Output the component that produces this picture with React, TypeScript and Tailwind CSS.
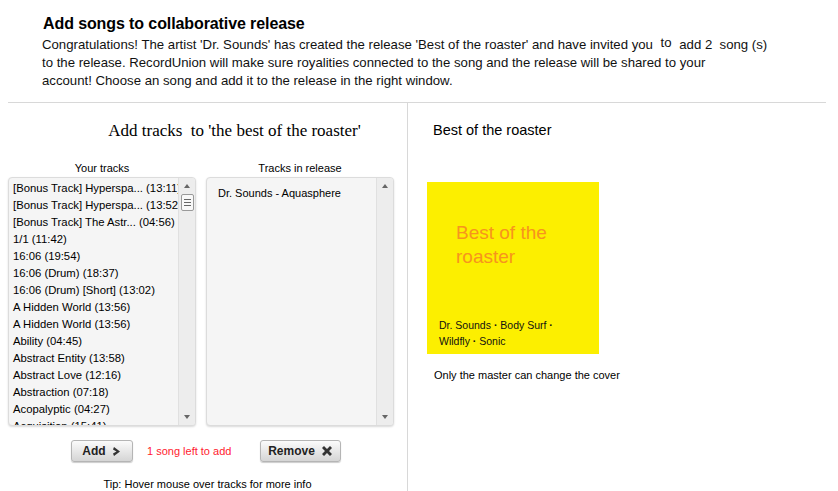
import React from "react";

const tracks = [
  "[Bonus Track] Hyperspa... (13:11)",
  "[Bonus Track] Hyperspa... (13:52)",
  "[Bonus Track] The Astr... (04:56)",
  "1/1 (11:42)",
  "16:06 (19:54)",
  "16:06 (Drum) (18:37)",
  "16:06 (Drum) [Short] (13:02)",
  "A Hidden World (13:56)",
  "A Hidden World (13:56)",
  "Ability (04:45)",
  "Abstract Entity (13:58)",
  "Abstract Love (12:16)",
  "Abstraction (07:18)",
  "Acopalyptic (04:27)",
  "Acquisition (15:41)",
];

function ScrollBar({ thumb }: { thumb?: boolean }) {
  return (
    <div className="absolute right-0 top-0 bottom-0 w-[17px] bg-[#ededed] border-l border-[#e0e0e0] flex flex-col items-center">
      <div className="h-[16px] w-full flex items-center justify-center">
        <div className="w-0 h-0 border-l-[3px] border-r-[3px] border-b-[4px] border-l-transparent border-r-transparent border-b-[#666]" />
      </div>
      {thumb && (
        <div className="w-[13px] h-[17px] bg-[#f8f8f8] border border-[#999] rounded-[2px] flex flex-col items-center justify-center gap-[2px]">
          <div className="w-[7px] h-px bg-[#666]" />
          <div className="w-[7px] h-px bg-[#666]" />
          <div className="w-[7px] h-px bg-[#666]" />
        </div>
      )}
      <div className="flex-1" />
      <div className="h-[16px] w-full flex items-center justify-center">
        <div className="w-0 h-0 border-l-[3px] border-r-[3px] border-t-[4px] border-l-transparent border-r-transparent border-t-[#666]" />
      </div>
    </div>
  );
}

export default function App() {
  const body = { fontFamily: "'Liberation Sans', Arial, sans-serif" };
  return (
    <div className="w-[838px] h-[491px] bg-white text-black overflow-hidden relative" style={body}>
      <div className="pl-[34px] pt-[13px] h-[103px] ml-[8px] border-b border-[#d8d8d8] w-[818px]">
        <h1 className="text-[16px] font-bold leading-[21px] ml-[1px] tracking-[-0.1px]">
          Add songs to collaborative release
        </h1>
        <p className="text-[13.2px] leading-[18px] mt-[2px] text-[#111] whitespace-nowrap">
          Congratulations! The artist 'Dr. Sounds' has created the release 'Best of the roaster' and have invited you <span className="relative -top-[2px] mx-[4px]">to</span> add 2 &nbsp;song (s)
          <br />
          to the release. RecordUnion will make sure royalities connected to the song and the release will be shared to your
          <br />
          account! Choose an song and add it to the release in the right window.
        </p>
      </div>
      <div className="flex ml-[8px]">
        <div className="w-[400px] border-r border-[#d8d8d8] h-[388px] flex flex-col">
          <div className="text-center text-[17px] pt-[17px] pl-[54px] leading-[22px]" style={{ fontFamily: "'Liberation Serif', serif" }}>
            Add tracks&nbsp; to 'the best of the roaster'
          </div>
          <div className="flex gap-[10px] mt-[19px]">
            <div className="w-[188px] flex flex-col items-center">
              <div className="text-[11px] leading-[14px] mb-[2px]">Your tracks</div>
              <div className="relative w-[188px] h-[249px] bg-[#f5f5f5] border border-[#dcdcdc] rounded-[4px] shadow-[0_1px_2px_rgba(0,0,0,0.15)] overflow-hidden">
                <div className="pl-[4px] pt-[2px] w-[170px] overflow-hidden">
                  {tracks.map((t, i) => (
                    <div key={i} className="text-[11.3px] leading-[17px] whitespace-nowrap">
                      {t}
                    </div>
                  ))}
                </div>
                <ScrollBar thumb />
              </div>
            </div>
            <div className="w-[188px] flex flex-col items-center">
              <div className="text-[11px] leading-[14px] mb-[2px]">Tracks in release</div>
              <div className="relative w-[188px] h-[249px] bg-[#f5f5f5] border border-[#dcdcdc] rounded-[4px] shadow-[0_1px_2px_rgba(0,0,0,0.15)] overflow-hidden">
                <div className="pl-[11px] pt-[8px] text-[11px] leading-[14px]">Dr. Sounds - Aquasphere</div>
                <ScrollBar />
              </div>
            </div>
          </div>
          <div className="flex items-center mt-[14px]">
            <button className="ml-[63px] w-[62px] h-[22px] rounded-[3px] border border-[#b5b5b5] bg-gradient-to-b from-[#fbfbfb] to-[#d5d5d5] shadow-[0_1px_1px_rgba(0,0,0,0.2)] flex items-center justify-center gap-[6px] text-[12px] font-bold text-[#222]">
              Add
              <svg width="10" height="11" viewBox="0 0 10 11">
                <path d="M2 1 L8 5.5 L2 10 L1 7.5 L4.5 5.5 L1 3.5 Z" fill="#333" />
              </svg>
            </button>
            <span className="ml-[14px] w-[113px] text-[11px] text-[#ff1a2e] whitespace-nowrap">1 song left to add</span>
            <button className="w-[81px] h-[22px] rounded-[3px] border border-[#b5b5b5] bg-gradient-to-b from-[#fbfbfb] to-[#d5d5d5] shadow-[0_1px_1px_rgba(0,0,0,0.2)] flex items-center justify-center gap-[6px] text-[12px] font-bold text-[#222]">
              Remove
              <svg width="12" height="12" viewBox="0 0 12 12">
                <path d="M1 3 L3 1 L6 4 L9 1 L11 3 L8 6 L11 9 L9 11 L6 8 L3 11 L1 9 L4 6 Z" fill="#333" />
              </svg>
            </button>
          </div>
          <div className="text-[11px] text-center mt-[14px]">Tip: Hover mouse over tracks for more info</div>
        </div>
        <div className="flex-1 pl-[25px]">
          <div className="text-[14.5px] leading-[20px] pt-[17px]">Best of the roaster</div>
          <div className="mt-[42px] -ml-[6px] w-[172px] h-[172px] bg-[#fcef00] flex flex-col justify-between pl-[29px] pr-[12px] pt-[39px] pb-[5px]">
            <div className="text-[19px] leading-[24px] text-[#f7941d]">Best of the<br />roaster</div>
            <div className="text-[10.5px] leading-[16px] -ml-[17px] text-[#111]">
              Dr. Sounds <span className="font-bold">·</span> Body Surf <span className="font-bold">·</span><br />Wildfly <span className="font-bold">·</span> Sonic
            </div>
          </div>
          <div className="text-[11px] mt-[13px] ml-[1px]">Only the master can change the cover</div>
        </div>
      </div>
    </div>
  );
}
